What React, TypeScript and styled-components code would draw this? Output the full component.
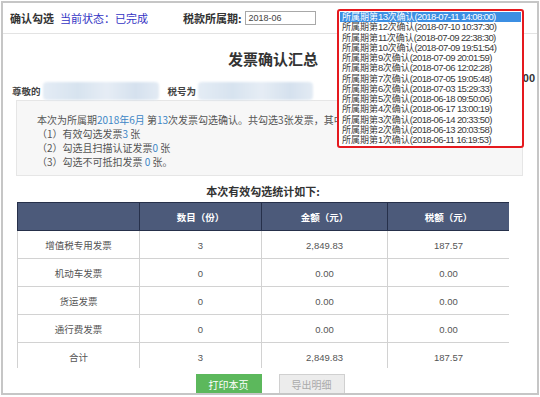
import styled, { createGlobalStyle } from 'styled-components';

const GlobalStyle = createGlobalStyle`
	body {
		margin: 0;
		background: #fff;
		font-family: 'Noto Sans CJK SC', 'Liberation Sans', sans-serif;
		color: #333;
	}
`;

const Page = styled.div`
	position: relative;
	width: 540px;
	height: 397px;
	overflow: hidden;
	padding: 1px;
	box-sizing: border-box;
`;

const Frame = styled.div`
	height: 394px;
	border: 2px solid #c6c6c6;
	box-sizing: border-box;
	display: flex;
	flex-direction: column;
	overflow: hidden;
`;

const Header = styled.div`
	height: 30px;
	flex-shrink: 0;
	display: flex;
	align-items: center;
	padding-left: 7px;
	border-bottom: 1px solid #e3e3e3;
	font-size: 11px;
	line-height: 14px;
`;

const Label = styled.span`
	font-weight: bold;
	color: #333;
`;

const Status = styled.span`
	color: #3434c4;
	margin-left: 6px;
`;

const Period = styled.div`
	display: flex;
	align-items: center;
	margin-left: 35px;
`;

const PeriodInput = styled.div`
	width: 66px;
	height: 12px;
	margin-left: 3px;
	border: 1px solid #a8a8a8;
	font-family: 'Liberation Sans', sans-serif;
	font-size: 9px;
	line-height: 12px;
	padding-left: 3px;
	color: #444;
`;

const Title = styled.div`
	margin-top: 15px;
	padding-left: 6px;
	text-align: center;
	font-size: 15px;
	line-height: 20px;
	font-weight: bold;
	color: #333;
`;

const DateLine = styled.div`
	margin-top: 4px;
	padding-right: 2px;
	text-align: right;
	font-family: 'Liberation Sans', sans-serif;
	font-size: 11px;
	line-height: 10px;
	font-weight: bold;
	color: #333;
`;

const Greeting = styled.div`
	display: flex;
	align-items: center;
	height: 18px;
	margin-top: -1px;
	padding-left: 9px;
	font-size: 9.5px;
	font-weight: bold;
	color: #444;
`;

const Masked = styled.div<{ $width: number }>`
	width: ${(p) => p.$width}px;
	height: 18px;
	margin-left: 2px;
	border-radius: 4px;
	background: linear-gradient(90deg, #e4ecf5 0%, #d7e3ef 30%, #e6edf5 55%, #d5e1ee 80%, #e3ebf4 100%);
	filter: blur(1px);
`;

const TaxLabel = styled.span`
	margin-left: 9px;
`;

const InfoBox = styled.div`
	margin: 0 0 0 13px;
	width: 507px;
	box-sizing: border-box;
	padding: 12px 0 6px 20px;
	background: #f7f7f7;
	border: 1px solid #e6e6e6;
	font-size: 10px;
	line-height: 14px;
	color: #555;
	white-space: nowrap;
`;

const Blue = styled.span`
	color: #3d86c6;
`;

const StatsTitle = styled.div`
	margin-top: 8px;
	width: 492px;
	margin-left: 14px;
	text-align: center;
	font-size: 11px;
	line-height: 14px;
	font-weight: bold;
	color: #333;
`;

const TableWrap = styled.div`
	margin: 4px 0 0 14px;
	width: 492px;
	height: 166px;
	overflow: hidden;
	flex-shrink: 0;
`;

const Table = styled.table`
	width: 492px;
	border-collapse: collapse;
	table-layout: fixed;
	font-size: 9.5px;
`;

const Th = styled.th`
	height: 27px;
	padding: 0;
	background: #4c5a7a;
	color: #fff;
	font-weight: bold;
	border: 1px solid #26304a;
	text-align: center;
`;

const Td = styled.td`
	height: 27px;
	padding: 0;
	border: 1px solid #d2d2d2;
	text-align: center;
	color: #555;
`;

const Num = styled.span`
	font-family: 'Liberation Sans', sans-serif;
	font-size: 9.5px;
`;

const Buttons = styled.div`
	display: flex;
	justify-content: center;
	gap: 17px;
	margin-top: 6px;
`;

const Btn = styled.div<{ $primary?: boolean }>`
	width: 66px;
	height: 21px;
	box-sizing: border-box;
	display: flex;
	align-items: center;
	justify-content: center;
	font-size: 10px;
	background: ${(p) => (p.$primary ? '#5cb85c' : '#ececec')};
	color: ${(p) => (p.$primary ? '#fff' : '#aaa')};
	border: 1px solid ${(p) => (p.$primary ? '#5cb85c' : '#d0d0d0')};
`;

const Dropdown = styled.div`
	position: absolute;
	left: 337px;
	top: 9px;
	width: 187px;
	height: 139px;
	box-sizing: border-box;
	border: 2px solid #e5191e;
	border-radius: 3px;
	background: #fff;
	padding: 1px;
`;

const Option = styled.div<{ $selected?: boolean }>`
	height: 10.25px;
	line-height: 10.25px;
	padding-left: 2px;
	font-size: 9px;
	white-space: nowrap;
	background: ${(p) => (p.$selected ? '#3c8fe3' : 'transparent')};
	color: ${(p) => (p.$selected ? '#fff' : '#3a3a3a')};
`;

const OptNum = styled.span`
	font-family: 'Liberation Sans', sans-serif;
	font-size: 9.5px;
	letter-spacing: -0.6px;
`;

const options = [
	['13', '2018-07-11 14:08:00'],
	['12', '2018-07-10 10:37:30'],
	['11', '2018-07-09 22:38:30'],
	['10', '2018-07-09 19:51:54'],
	['9', '2018-07-09 20:01:59'],
	['8', '2018-07-06 12:02:28'],
	['7', '2018-07-05 19:05:48'],
	['6', '2018-07-03 15:29:33'],
	['5', '2018-06-18 09:50:06'],
	['4', '2018-06-17 13:00:19'],
	['3', '2018-06-14 20:33:50'],
	['2', '2018-06-13 20:03:58'],
	['1', '2018-06-11 16:19:53'],
];

const rows = [
	['增值税专用发票', '3', '2,849.83', '187.57'],
	['机动车发票', '0', '0.00', '0.00'],
	['货运发票', '0', '0.00', '0.00'],
	['通行费发票', '0', '0.00', '0.00'],
	['合计', '3', '2,849.83', '187.57'],
];

const App = () => {
	return (
		<Page>
			<GlobalStyle />
			<Frame>
				<Header>
					<Label>确认勾选</Label>
					<Status>当前状态：已完成</Status>
					<Period>
						<Label>税款所属期:</Label>
						<PeriodInput>2018-06</PeriodInput>
					</Period>
				</Header>

				<Title>发票确认汇总</Title>
				<DateLine>2018-07-11 14:08:00</DateLine>

				<Greeting>
					尊敬的
					<Masked $width={116} />
					<TaxLabel>税号为</TaxLabel>
					<Masked $width={115} />
				</Greeting>

				<InfoBox>
					<div>
						本次为所属期<Blue>2018年6月</Blue> 第<Blue>13</Blue>次发票勾选确认。共勾选3张发票，其中有效勾选发票3张。
					</div>
					<div>
						（1）有效勾选发票<Blue>3</Blue> 张
					</div>
					<div>
						（2）勾选且扫描认证发票<Blue>0</Blue> 张
					</div>
					<div>
						（3）勾选不可抵扣发票 <Blue>0</Blue> 张。
					</div>
				</InfoBox>

				<StatsTitle>本次有效勾选统计如下:</StatsTitle>

				<TableWrap>
					<Table>
						<colgroup>
							<col style={{ width: 122 }} />
							<col style={{ width: 122 }} />
							<col style={{ width: 126 }} />
							<col style={{ width: 122 }} />
						</colgroup>
						<thead>
							<tr>
								<Th />
								<Th>数目（份）</Th>
								<Th>金额（元）</Th>
								<Th>税额（元）</Th>
							</tr>
						</thead>
						<tbody>
							{rows.map((r) => (
								<tr key={r[0]}>
									<Td>{r[0]}</Td>
									<Td>
										<Num>{r[1]}</Num>
									</Td>
									<Td>
										<Num>{r[2]}</Num>
									</Td>
									<Td>
										<Num>{r[3]}</Num>
									</Td>
								</tr>
							))}
						</tbody>
					</Table>
				</TableWrap>

				<Buttons>
					<Btn $primary>打印本页</Btn>
					<Btn>导出明细</Btn>
				</Buttons>
			</Frame>

			<Dropdown>
				{options.map(([n, t], i) => (
					<Option key={n} $selected={i === 0}>
						所属期第<OptNum>{n}</OptNum>次确认<OptNum>({t})</OptNum>
					</Option>
				))}
			</Dropdown>
		</Page>
	);
};

export default App;
